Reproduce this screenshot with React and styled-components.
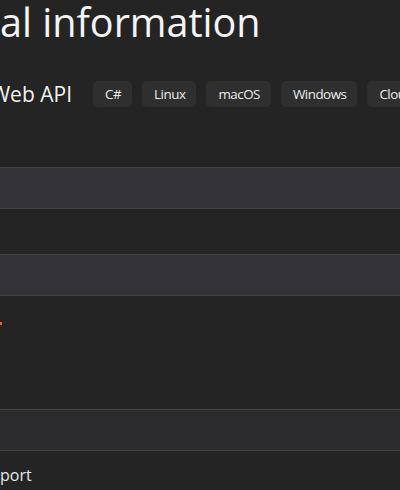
import styled, { createGlobalStyle } from 'styled-components';

const GlobalStyle = createGlobalStyle`
  html, body {
    margin: 0;
    padding: 0;
    background: #242424;
  }
  body {
    font-family: "Open Sans", "Noto Sans", sans-serif;
    color: #e6e6e6;
    overflow: hidden;
  }
`;

const Page = styled.main`
  width: 400px;
  height: 490px;
  overflow: hidden;
  background: #242424;
`;

const Title = styled.h1`
  margin: 0;
  font-size: 39.6px;
  line-height: 44px;
  font-weight: 400;
  color: #f4f4f4;
  white-space: nowrap;
`;

const TagRow = styled.div`
  display: flex;
  align-items: center;
  margin-top: 37px;
  height: 26px;
`;

const Product = styled.div`
  width: 72px;
  flex: 0 0 72px;
  display: flex;
  justify-content: flex-end;
  overflow: hidden;
  white-space: nowrap;
  font-size: 21px;
  line-height: 26px;
  color: #f2f2f2;
  margin-right: 21px;
`;

const Tags = styled.ul`
  display: flex;
  gap: 10px;
  margin: 0;
  padding: 0;
  list-style: none;
`;

const Tag = styled.li`
  flex: 0 0 auto;
  height: 26px;
  padding: 1px 11px 0 12px;
  box-sizing: border-box;
  border-radius: 5px;
  background: #2f2f2f;
  font-size: 13.4px;
  letter-spacing: -0.5px;
  line-height: 25px;
  color: #ececec;
  white-space: nowrap;
`;

const Table = styled.div`
  margin-top: 60px;
`;

const Row = styled.div`
  border-top: 1px solid #444446;
  height: ${p => p.$h}px;
  background: ${p => p.$shade || 'transparent'};
`;

const Cell = styled.div`
  padding-top: 12px;
  font-size: 16px;
  line-height: 24px;
  color: #e6e6e6;
  white-space: nowrap;
`;

// tail of a marker cut off at the left edge
const Mark = styled.span`
  display: block;
  width: 2px;
  height: 3px;
  margin-top: 26px;
  background: #e0662b;
`;

const tags = ['C#', 'Linux', 'macOS', 'Windows', 'Cloud'];

export default function App() {
  return (
    <Page>
      <GlobalStyle />
      <Title>al information</Title>
      <TagRow>
        <Product>Web API</Product>
        <Tags>
          {tags.map(t => (
            <Tag key={t}>{t}</Tag>
          ))}
        </Tags>
      </TagRow>
      <Table>
        <Row $h={40} $shade="#333337" />
        <Row $h={45} />
        <Row $h={40} $shade="#333337" />
        <Row $h={113}>
          <Mark />
        </Row>
        <Row $h={40} $shade="#2c2c2e" />
        <Row $h={40}>
          <Cell>port</Cell>
        </Row>
      </Table>
    </Page>
  );
}
